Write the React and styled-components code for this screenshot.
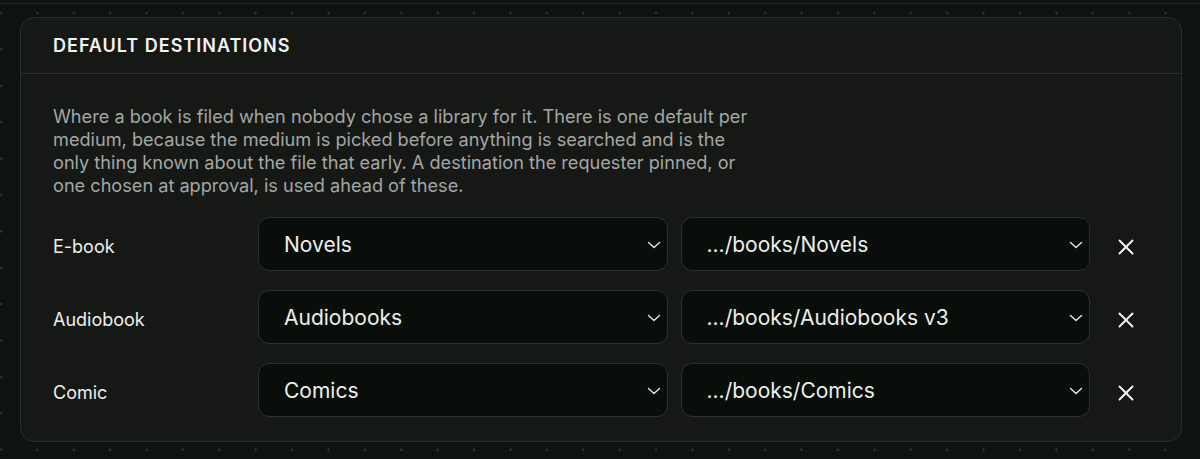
import { Fragment } from "react";
import styled, { createGlobalStyle } from "styled-components";
import { X } from "lucide-react";

const GlobalStyle = createGlobalStyle`
  html, body {
    margin: 0;
    padding: 0;
    background-color: #0e130f;
  }
  body {
    font-family: Inter, "Noto Sans", sans-serif;
    color: #eef0ee;
  }
`;

const Page = styled.div`
  min-height: 455px;
  box-sizing: border-box;
  padding: 13px 18px 18px 20px;
  border-top: 1px solid #262b27;
  margin-top: 3px;
  background-color: #0e130f;
  background-image: radial-gradient(circle, #2b3a2f 1.1px, transparent 1.4px);
  background-size: 36.4px 36.4px;
  background-position: -17.2px -9.2px;
`;

const Card = styled.section`
  background-color: #161816;
  border: 1px solid #2b2f2c;
  border-radius: 14px;
`;

const CardHeader = styled.header`
  padding: 18px 32px 17px;
  border-bottom: 1px solid #2b2f2c;
`;

const Title = styled.h2`
  margin: 0;
  font-size: 18px;
  font-weight: 600;
  letter-spacing: 1px;
  line-height: 20px;
  color: #f2f3f2;
`;

const CardBody = styled.div`
  padding: 31px 32px 24px;
`;

const Description = styled.p`
  margin: 0 0 20px;
  max-width: 708px;
  font-size: 18.15px;
  line-height: 23px;
  color: #a4a7a5;
`;

const Rows = styled.div`
  display: grid;
  grid-template-columns: 192px 1fr 1fr 46px;
  column-gap: 13px;
  row-gap: 19px;
  align-items: center;
`;

const Label = styled.div`
  font-size: 18px;
  padding-top: 4px;
  color: #eef0ee;
`;

const Select = styled.div`
  display: flex;
  align-items: center;
  justify-content: space-between;
  height: 54px;
  box-sizing: border-box;
  padding: 0 6px 0 25px;
  background-color: #0a0e0b;
  border: 1px solid #2d312e;
  border-radius: 11px;
  font-size: 21px;
  color: #eceeec;
`;

const Chevron = styled.svg`
  width: 14px;
  height: 8px;
  flex: none;
  margin-top: 2px;
`;

const RemoveButton = styled.button`
  display: flex;
  align-items: center;
  justify-content: center;
  height: 40px;
  padding: 0;
  margin-top: 6px;
  background: none;
  border: none;
  color: #f2f3f2;
  cursor: pointer;
`;

const rows = [
  { medium: "E-book", library: "Novels", path: ".../books/Novels" },
  { medium: "Audiobook", library: "Audiobooks", path: ".../books/Audiobooks v3" },
  { medium: "Comic", library: "Comics", path: ".../books/Comics" },
];

function ChevronDown() {
  return (
    <Chevron viewBox="0 0 14 8" fill="none">
      <path d="M1.5 1.5 7 6.5l5.5-5" stroke="#e6e8e6" strokeWidth="1.4" strokeLinecap="round" strokeLinejoin="round" />
    </Chevron>
  );
}

export default function App() {
  return (
    <>
      <GlobalStyle />
      <Page>
        <Card>
          <CardHeader>
            <Title>DEFAULT DESTINATIONS</Title>
          </CardHeader>
          <CardBody>
            <Description>
              Where a book is filed when nobody chose a library for it. There is one default per
              medium, because the medium is picked before anything is searched and is the only
              thing known about the file that early. A destination the requester pinned, or one
              chosen at approval, is used ahead of these.
            </Description>
            <Rows>
              {rows.map((row) => (
                <Fragment key={row.medium}>
                  <Label>{row.medium}</Label>
                  <Select>
                    <span>{row.library}</span>
                    <ChevronDown />
                  </Select>
                  <Select>
                    <span>{row.path}</span>
                    <ChevronDown />
                  </Select>
                  <RemoveButton aria-label={`Remove ${row.medium} default`}>
                    <X size={26} strokeWidth={1.8} />
                  </RemoveButton>
                </Fragment>
              ))}
            </Rows>
          </CardBody>
        </Card>
      </Page>
    </>
  );
}
